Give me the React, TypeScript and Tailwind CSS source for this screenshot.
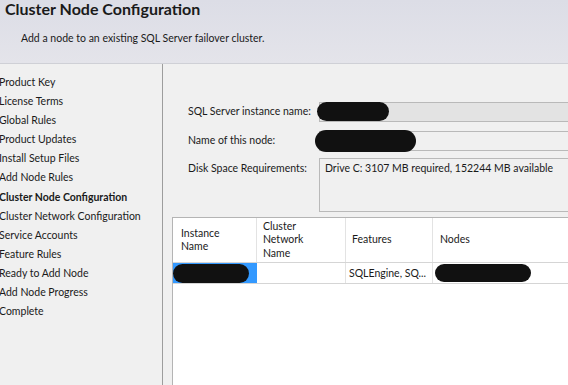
const steps = [
  'Product Key',
  'License Terms',
  'Global Rules',
  'Product Updates',
  'Install Setup Files',
  'Add Node Rules',
  'Cluster Node Configuration',
  'Cluster Network Configuration',
  'Service Accounts',
  'Feature Rules',
  'Ready to Add Node',
  'Add Node Progress',
  'Complete',
];

function Scribble({ className }: { className: string }) {
  // redaction blot over the real value
  return <div className={`rounded-full bg-[#111] ${className}`} />;
}

export default function App() {
  return (
    <div className="w-[568px] h-[385px] overflow-hidden bg-[#f0f0f0] flex flex-col text-[#1a1a1a] text-[10.5px] font-['Lato','Open_Sans',sans-serif]">
      {/* Header */}
      <div className="h-[64px] shrink-0 bg-gradient-to-b from-[#dcdde6] to-[#e4e4ea] border-b border-[#cfd0d6]">
        <h1 className="pl-[5px] text-[16px] font-bold leading-[18px]">Cluster Node Configuration</h1>
        <p className="pl-[21px] mt-[13px] leading-[14px] whitespace-nowrap">
          Add a node to an existing SQL Server failover cluster.
        </p>
      </div>

      <div className="flex flex-1 min-h-0">
        {/* Steps */}
        <nav className="w-[164px] shrink-0 border-r border-[#9d9d9d] pt-[9px] -ml-[1px]">
          {steps.map((s) => (
            <div
              key={s}
              className={`h-[19.1px] leading-[19px] whitespace-nowrap ${
                s === 'Cluster Node Configuration' ? 'font-bold' : ''
              }`}
            >
              {s}
            </div>
          ))}
        </nav>

        {/* Content */}
        <div className="flex-1 min-w-0 pl-[9px] pt-[38px] flex flex-col">
          <div className="pl-[16px] flex flex-col">
            <div className="flex items-center h-[20px]">
              <span className="w-[131px] shrink-0 whitespace-nowrap">SQL Server instance name:</span>
              <div className="relative flex-1 h-[20px] bg-[#e3e3e3] border border-[#b9b9b9] -mr-[2px]">
                <Scribble className="absolute left-[-3px] top-[-1px] w-[72px] h-[19px]" />
              </div>
            </div>
            <div className="flex items-center h-[20px] mt-[9px]">
              <span className="w-[131px] shrink-0 whitespace-nowrap">Name of this node:</span>
              <div className="relative flex-1 h-[20px] bg-[#f0f0f0] border border-[#b9b9b9] -mr-[2px]">
                <Scribble className="absolute left-[-5px] top-[-2px] w-[101px] h-[22px]" />
              </div>
            </div>
            <div className="flex items-start mt-[7px]">
              <span className="w-[131px] shrink-0 pt-[3px] whitespace-nowrap">Disk Space Requirements:</span>
              <div className="flex-1 h-[54px] border border-[#b9b9b9] pl-[5px] pt-[2px] -mr-[2px] whitespace-nowrap">
                Drive C: 3107 MB required, 152244 MB available
              </div>
            </div>
          </div>

          {/* Instances table */}
          <div className="mt-[5px] flex-1 bg-white border border-[#b4b4b4] border-r-0 border-b-0">
            <div className="flex h-[45px] border-b border-[#d5d5d5] leading-[13.5px]">
              <div className="w-[84px] shrink-0 border-r border-[#e3e3e3] pl-[8px] flex items-center">
                Instance
                <br />
                Name
              </div>
              <div className="w-[89px] shrink-0 border-r border-[#e3e3e3] pl-[6px] flex items-center">
                Cluster
                <br />
                Network
                <br />
                Name
              </div>
              <div className="w-[87px] shrink-0 border-r border-[#e3e3e3] pl-[6px] flex items-center">
                Features
              </div>
              <div className="flex-1 pl-[7px] flex items-center">Nodes</div>
            </div>
            <div className="flex h-[21px] border-b border-[#d5d5d5] leading-[20px]">
              <div className="relative w-[84px] shrink-0 bg-[#3399ff]">
                <Scribble className="absolute left-0 top-[1px] w-[76px] h-[19px]" />
              </div>
              <div className="w-[89px] shrink-0 border-r border-[#e3e3e3]" />
              <div className="w-[87px] shrink-0 border-r border-[#e3e3e3] pl-[3px] whitespace-nowrap">
                SQLEngine, SQ...
              </div>
              <div className="relative flex-1">
                <Scribble className="absolute left-[2px] top-[1px] w-[96px] h-[18px]" />
              </div>
            </div>
          </div>
        </div>
      </div>
    </div>
  );
}
